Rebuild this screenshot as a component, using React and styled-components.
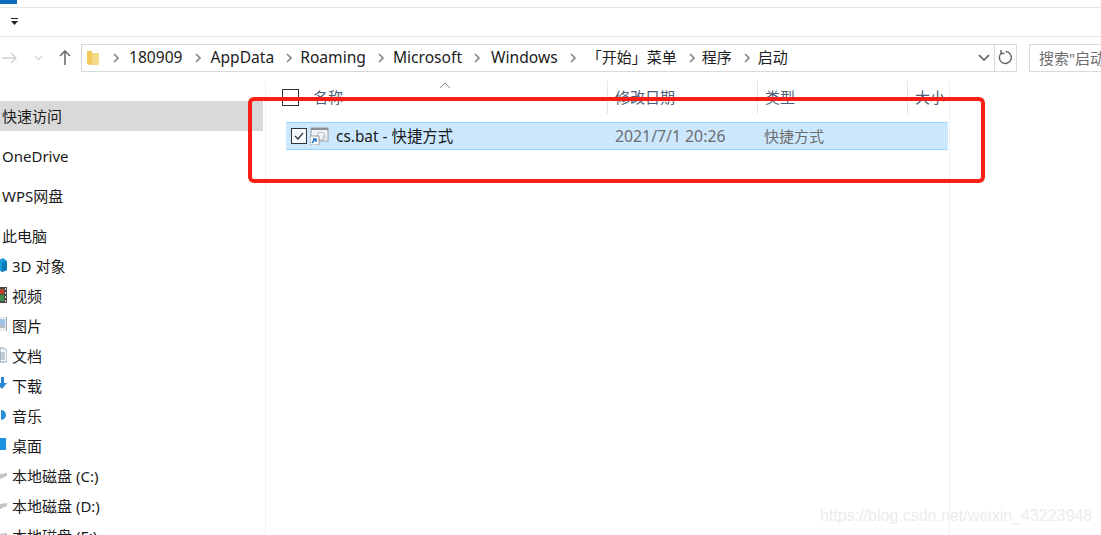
import React from "react";
import styled, { createGlobalStyle } from "styled-components";

const Global = createGlobalStyle`
  html, body { margin: 0; padding: 0; background: #fff; }
  body { font-family: "Noto Sans", "Noto Sans CJK SC", sans-serif; }
  #root { width: 1101px; height: 535px; overflow: hidden; }
`;
const Page = styled.div`
  position: relative; width: 1101px; height: 535px; overflow: hidden; background: #fff;
  display: flex; flex-direction: column; color: #1a1a1a; font-size: 15px;
`;
const TitleStrip = styled.div`height: 7px; border-bottom: 1px solid #e3e3e3; display: flex;`;
const FileTab = styled.div`width: 17px; height: 4px; background: #0f6cbd;`;
const QuickBar = styled.div`
  height: 28px; border-bottom: 1px solid #e3e3e3; padding-left: 11px; display: flex; align-items: center;
`;
const NavBar = styled.div`
  height: 41px; display: flex; align-items: center; padding: 0 0 0 1px; margin-bottom: 3px;
`;
const NavIcons = styled.div`width: 80px; flex: none; display: flex; align-items: center;`;
const AddressBox = styled.div`
  width: 936px; height: 28px; flex: none; box-sizing: border-box; border: 1px solid #d9d9d9;
  display: flex; align-items: center; padding-left: 5px; position: relative;
`;
const Crumb = styled.span`
  font-size: ${p => p.$fs}px; line-height: 25px; white-space: nowrap; color: #1c1c1c; margin-left: ${p => p.$ml}px;
  padding-bottom: 1px;
`;
const Chevron = styled.svg`width: 6px; height: 10px; flex: none; margin-left: ${p => p.$ml}px;`;
const AddressEnd = styled.div`
  position: absolute; right: 0; top: 0; bottom: 0; display: flex; align-items: center;
`;
const RefreshCell = styled.div`
  width: 21px; height: 26px; border-left: 1px solid #d9d9d9; display: flex; align-items: center; justify-content: center;
`;
const SearchBox = styled.div`
  margin-left: 12px; flex: 1; height: 28px; box-sizing: border-box; border: 1px solid #d9d9d9; border-right: 0;
  padding-left: 9px; font-size: 15px; line-height: 26px; color: #6d6d6d; white-space: nowrap; overflow: hidden;
`;
const Body = styled.div`flex: 1; display: flex; min-height: 0;`;
const Side = styled.nav`
  width: 266px; flex: none; box-sizing: border-box; border-right: 1px solid #f0f0f0; padding-top: 20px; overflow: hidden;
`;
const NavRow = styled.div`
  height: 30px; width: 263px; display: flex; align-items: center; white-space: nowrap; font-size: 15px;
  padding-left: ${p => (p.$sub ? 0 : 2)}px; padding-bottom: ${p => (p.$latin ? 0 : 2)}px; box-sizing: border-box;
  background: ${p => (p.$active ? "#d9d9d9" : "transparent")};
  margin-bottom: ${p => (p.$gap ? 10 : 0)}px;
`;
const NavIconSlot = styled.span`
  width: 7px; height: 16px; overflow: hidden; flex: none; margin-right: 5px; display: flex; justify-content: flex-end;
  svg { flex: none; }
`;
const Main = styled.main`flex: 1; position: relative; min-width: 0;`;
const Header = styled.div`
  height: 33px; width: 684px; display: flex; position: relative; box-sizing: border-box; border-right: 1px solid #f0f0f0;
`;
const HeadCheck = styled.div`
  position: absolute; left: 16px; top: 8px; width: 15px; height: 15px; border: 1px solid #333;
`;
const SortArrow = styled.svg`position: absolute; left: 173px; top: 1px; width: 12px; height: 7px;`;
const HeadCell = styled.div`
  width: ${p => p.$w}px; flex: none; box-sizing: border-box; padding-left: ${p => p.$pl}px;
  border-right: ${p => (p.$line ? "1px solid #e5e5e5" : "0")};
  color: #4c607a; font-size: 15px; line-height: 33px; white-space: nowrap;
`;
const FileRow = styled.div`
  margin: 8px 0 0 20px; width: 662px; height: 28px; box-sizing: border-box; background: #cce8ff; border: 1px solid #99d1ff;
  border-left-color: #cce8ff; border-right-color: #cce8ff;
  display: flex; align-items: center; position: relative;
`;
const RowCheck = styled.div`
  width: 14px; height: 14px; margin-left: 4px; border: 1px solid #333; background: #f4fbff; flex: none;
  display: flex; align-items: center; justify-content: center;
`;
const FileIcon = styled.svg`width: 19px; height: 18px; margin-left: 3px; flex: none;`;
const FileName = styled.span`
  width: 279px; margin-left: 6px; padding-left: 1px; padding-bottom: 2px; box-sizing: border-box; flex: none;
  color: #1a1a1a; font-size: 15.4px; white-space: nowrap;
`;
const FileMeta = styled.span`
  width: ${p => p.$w}px; flex: none; color: #6d6d6d; font-size: ${p => p.$fs}px; white-space: nowrap;
  padding-bottom: ${p => p.$pb}px; padding-left: ${p => p.$pl}px; box-sizing: border-box;
`;
const ColumnEdge = styled.div`position: absolute; left: 683px; top: 33px; bottom: 0; width: 1px; background: #f0f0f0;`;
const RedFrame = styled.div`
  position: absolute; left: 248px; top: 97px; width: 737px; height: 86px; box-sizing: border-box;
  border: 4px solid #fb1e14; border-radius: 6px; pointer-events: none;
`;
const Watermark = styled.div`
  position: absolute; left: 820px; top: 506px; font-family: "Liberation Sans", sans-serif; font-size: 16px;
  color: #ececec; white-space: nowrap; line-height: 20px;
`;

const crumbs = [
  ["180909", 10, 15.6], ["AppData", 10, 15.6], ["Roaming", 8, 15.6], ["Microsoft", 9, 15.6], ["Windows", 11, 15.6], ["「开始」菜单", 11, 15], ["程序", 7, 15], ["启动", 8, 15],
];

const Cube = () => <svg width="8" height="16" viewBox="0 0 8 16"><path d="M0 3 4 1 8 4v9l-5 2-3-2z" fill="#1a9ad6" /><path d="M3 6 8 4v9l-5 2z" fill="#0b78b4" /></svg>;
const Film = () => <svg width="7" height="16" viewBox="0 0 7 16"><rect width="7" height="16" fill="#4a4a4a" /><rect width="4" height="5" y="2" fill="#c2412d" /><rect width="4" height="6" y="8" fill="#3f8f4c" /><path d="M5 1h1v2H5zM5 5h1v2H5zM5 9h1v2H5zM5 13h1v2H5z" fill="#ddd" /></svg>;
const Pict = () => <svg width="7" height="14" viewBox="0 0 7 14"><rect width="7" height="14" fill="#e8eef2" /><rect y="2" width="5" height="6" fill="#9fc5e8" /><rect y="8" width="5" height="3" fill="#b5bdc4" /><path d="M6 0h1v14H6z" fill="#9aa5ad" /></svg>;
const Doc = () => <svg width="7" height="16" viewBox="0 0 7 16"><path d="M0 1h4l3 3v11H0z" fill="#f4f7fa" stroke="#8ea2b5" /><path d="M0 6h5M0 8h5M0 10h5M0 12h5" stroke="#8ea2b5" /></svg>;
const Down = () => <svg width="8" height="16" viewBox="0 0 8 16"><path d="M2 0h3v6h3l-5 6-3-3V6h2z" fill="#2787d6" /></svg>;
const Music = () => <svg width="6" height="16" viewBox="0 0 6 16"><circle cx="0" cy="8" r="5" fill="#2a8fd8" /></svg>;
const Desk = () => <svg width="7" height="14" viewBox="0 0 7 14"><rect y="1" width="6" height="12" fill="#1d92e3" /></svg>;
const Disk = () => <svg width="7" height="16" viewBox="0 0 7 16"><path d="M0 7 7 6v3l-7 3z" fill="#c4c4c4" /></svg>;

const navGroups = [
  { label: "快速访问", active: true, gap: true },
  { label: "OneDrive", gap: true, latin: true },
  { label: "WPS网盘", gap: true },
  { label: "此电脑" },
  { label: "3D 对象", icon: <Cube /> },
  { label: "视频", icon: <Film /> },
  { label: "图片", icon: <Pict /> },
  { label: "文档", icon: <Doc /> },
  { label: "下载", icon: <Down /> },
  { label: "音乐", icon: <Music /> },
  { label: "桌面", icon: <Desk /> },
  { label: "本地磁盘 (C:)", icon: <Disk /> },
  { label: "本地磁盘 (D:)", icon: <Disk /> },
  { label: "本地磁盘 (E:)", icon: <Disk /> },
];

export default function App() {
  return (
    <Page>
      <Global />
      <TitleStrip><FileTab /></TitleStrip>
      <QuickBar>
        <svg width="7" height="8" viewBox="0 0 7 8"><path d="M0 0h7v1H0z" fill="#222" /><path d="M0 3h7L3.5 7z" fill="#222" /></svg>
      </QuickBar>
      <NavBar>
        <NavIcons>
          <svg width="16" height="12" viewBox="0 0 16 12" fill="none" stroke="#cfcfcf" strokeWidth="1.3"><path d="M1 6h14M10 1l5 5-5 5" /></svg>
          <svg width="9" height="6" viewBox="0 0 9 6" fill="none" stroke="#d4d4d4" strokeWidth="1.3" style={{ marginLeft: 17 }}><path d="M1 1l3.5 3.500L8 1" /></svg>
          <svg width="12" height="15" viewBox="0 0 12 15" fill="none" stroke="#6f6f6f" strokeWidth="1.6" style={{ marginLeft: 16 }}><path d="M6 15V1M1 6l5-5 5 5" /></svg>
        </NavIcons>
        <AddressBox>
          <svg width="12" height="16" viewBox="0 0 12 16" style={{ flex: "none" }}><path d="M0 1h4l1 2h7v12H3L0 13z" fill="#f7d98a" /><path d="M0 1h5v14H2L0 13z" fill="#f4c95c" /></svg>
          {crumbs.map(([t, gap, fs], i) => (
            <React.Fragment key={t}>
              <Chevron $ml={i === 0 ? 14 : 12} viewBox="0 0 6 10" fill="none" stroke="#888" strokeWidth="1.6"><path d="M1 1l4 4-4 4" /></Chevron>
              <Crumb $ml={gap} $fs={fs}>{t}</Crumb>
            </React.Fragment>
          ))}
          <AddressEnd>
            <svg width="12" height="7" viewBox="0 0 12 7" fill="none" stroke="#555" strokeWidth="1.5" style={{ marginRight: 4 }}><path d="M1 1l5 5 5-5" /></svg>
            <RefreshCell>
              <svg width="15" height="15" viewBox="0 0 15 15" fill="none" stroke="#666" strokeWidth="1.4"><path d="M4 2.500a6 6 0 1 0 3.500-1" /><path d="M3 0v3.500h3.500" /></svg>
            </RefreshCell>
          </AddressEnd>
        </AddressBox>
        <SearchBox>搜索"启动"</SearchBox>
      </NavBar>
      <Body>
        <Side>
          {navGroups.map(n => (
            <NavRow key={n.label} $active={n.active} $gap={n.gap} $sub={!!n.icon} $latin={n.latin}>
              {n.icon && <NavIconSlot>{n.icon}</NavIconSlot>}
              {n.label}
            </NavRow>
          ))}
        </Side>
        <Main>
          <Header>
            <HeadCheck />
            <SortArrow viewBox="0 0 12 7" fill="none" stroke="#888" strokeWidth="1"><path d="M1 6l5-5 5 5" /></SortArrow>
            <HeadCell $w={342} $pl={47} $line>名称</HeadCell>
            <HeadCell $w={150} $pl={7} $line>修改日期</HeadCell>
            <HeadCell $w={150} $pl={7} $line>类型</HeadCell>
            <HeadCell $w={41} $pl={7}>大小</HeadCell>
          </Header>
          <FileRow>
            <RowCheck>
              <svg width="10" height="8" viewBox="0 0 10 8" fill="none" stroke="#333" strokeWidth="1.2"><path d="M1 4l3 3 5-6" /></svg>
            </RowCheck>
            <FileIcon viewBox="0 0 19 18">
              <rect x="1" y="1" width="17" height="13" fill="#f2f5f7" stroke="#9a9a9a" />
              <path d="M1 1h17v2H1z" fill="#8f8f8f" />
              <circle cx="11" cy="9" r="4" fill="none" stroke="#a9bfd0" />
              <circle cx="14" cy="10" r="2" fill="#c9d4dc" />
              <rect x="0" y="9" width="9" height="9" fill="#fff" stroke="#9a9a9a" />
              <path d="M2 16l3-4M3 12h3v3" fill="none" stroke="#1d6fd1" strokeWidth="1.4" />
            </FileIcon>
            <FileName>cs.bat - 快捷方式</FileName>
            <FileMeta $w={150} $fs={15.8} $pl={1} $pb={0}>2021/7/1 20:26</FileMeta>
            <FileMeta $w={120} $fs={15} $pl={0} $pb={2}>快捷方式</FileMeta>
          </FileRow>
          <ColumnEdge />
        </Main>
      </Body>
      <RedFrame />
      <Watermark>https://blog.csdn.net/weixin_43223948</Watermark>
    </Page>
  );
}
